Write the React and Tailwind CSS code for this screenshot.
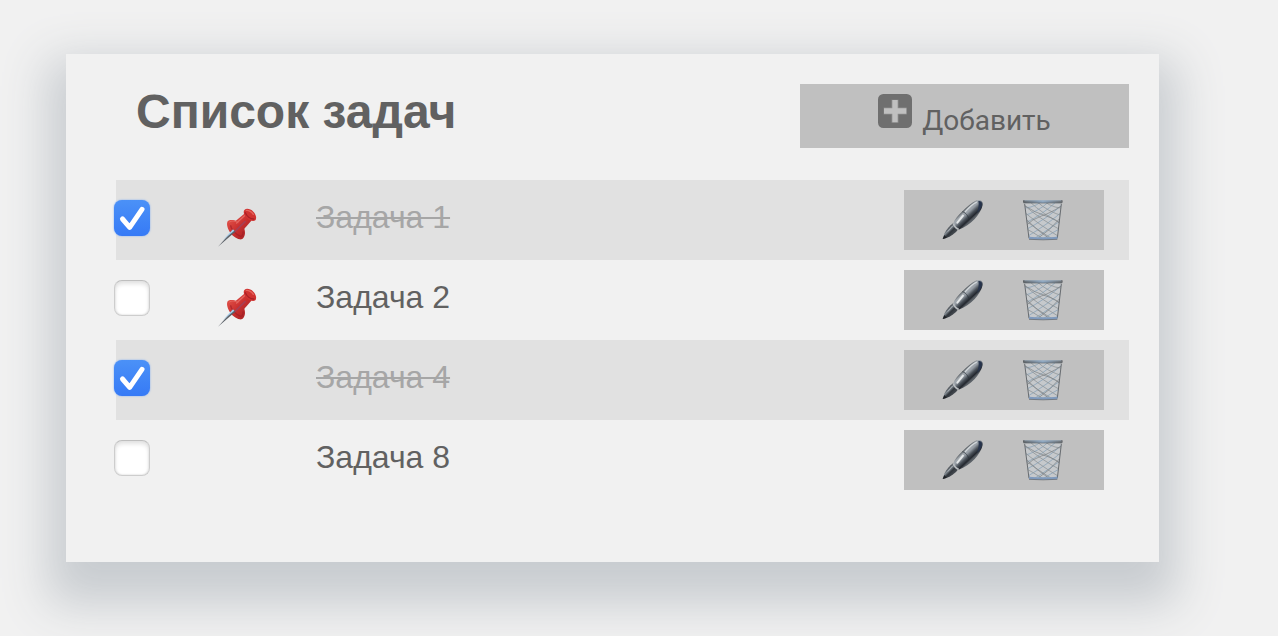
import { useState } from "react";

const initialTasks = [
  { id: 1, title: "Задача 1", done: true, pinned: true },
  { id: 2, title: "Задача 2", done: false, pinned: true },
  { id: 4, title: "Задача 4", done: true, pinned: false },
  { id: 8, title: "Задача 8", done: false, pinned: false },
];

function PlusIcon() {
  return (
    <svg viewBox="0 0 102 102" className="size-[34px]" aria-hidden="true">
      <rect width="102" height="102" rx="16" fill="#6f6f6f" />
      <path d="M51 17V86M17 51H86" stroke="#8c8c8c" strokeWidth="21" />
      <path d="M51 18V85M18 51H85" stroke="#c0c0c0" strokeWidth="16" />
    </svg>
  );
}

function PinIcon() {
  return (
    <svg viewBox="0 0 168 168" className="size-14" aria-hidden="true">
      <defs>
        <linearGradient id="pinBody" x1="0" y1="0" x2="1" y2="1">
          <stop offset="0" stopColor="#e0524a" />
          <stop offset="0.5" stopColor="#cb302f" />
          <stop offset="1" stopColor="#a92426" />
        </linearGradient>
      </defs>
      <path d="M53 64C58 58 72 59 86 65C97 71 106 86 105 99C104 113 97 120 89 118C78 116 65 107 58 94C52 83 49 71 53 64Z" fill="url(#pinBody)" />
      <path d="M62 76C62 86 78 105 92 109C98 109 100 102 99 94" fill="none" stroke="#9c1d25" strokeWidth="4" opacity="0.6" />
      <path d="M73 66L103 41C112 42 125 55 124 62L99 91C90 94 71 76 73 66Z" fill="url(#pinBody)" />
      <path d="M80 69L105 46" stroke="#e56660" strokeWidth="4" strokeLinecap="round" />
      <path d="M74 95L105 65" stroke="#9c4560" strokeWidth="5" strokeLinecap="round" opacity="0.75" />
      <path d="M104 29C110 24 122 27 130 35C138 43 141 55 136 61C130 66 118 62 110 54C102 46 98 34 104 29Z" fill="#d03331" />
      <path d="M105 37C110 48 121 58 133 57" fill="none" stroke="#a92127" strokeWidth="4" />
      <path d="M109 31C116 30 126 36 130 43" fill="none" stroke="#e4645d" strokeWidth="4" strokeLinecap="round" />
      <path d="M57 67C65 61 78 63 85 68" fill="none" stroke="#e4645d" strokeWidth="3" />
      <path d="M24 140L70 89L76 95Z" fill="#5a6068" />
      <path d="M38 121L69 88L73 92Z" fill="#a9cfec" />
    </svg>
  );
}

function PenIcon() {
  return (
    <svg viewBox="12 0 180 180" className="size-[60px]" aria-hidden="true">
      <defs>
        <linearGradient id="penBody" gradientUnits="userSpaceOnUse" x1="94" y1="66" x2="120" y2="94">
          <stop offset="0" stopColor="#50565b" />
          <stop offset="0.2" stopColor="#a4aab0" />
          <stop offset="0.38" stopColor="#969da5" />
          <stop offset="0.62" stopColor="#4b525a" />
          <stop offset="0.85" stopColor="#23272e" />
          <stop offset="1" stopColor="#5a6066" />
        </linearGradient>
        <linearGradient id="penNib" gradientUnits="userSpaceOnUse" x1="50" y1="116" x2="68" y2="134">
          <stop offset="0" stopColor="#33383d" />
          <stop offset="0.3" stopColor="#858d94" />
          <stop offset="0.6" stopColor="#30353b" />
          <stop offset="1" stopColor="#454a50" />
        </linearGradient>
      </defs>
      <path d="M38 147L43 131C50 118 59 107 70 99L86 116C76 130 63 139 47 145Z" fill="url(#penNib)" />
      <path d="M38 147L43 135L50 143Z" fill="#1d2024" />
      <path d="M69 101C76 86 84 76 96 65C110 51 126 37 140 31C151 27 160 34 158 45C155 61 145 74 134 87C121 101 104 113 86 119Z" fill="url(#penBody)" />
      <path d="M145 33C155 31 159 40 154 51C151 58 146 65 141 69C145 56 148 45 145 33Z" fill="#27344c" />
      <path d="M106 65C118 51 130 41 139 37" fill="none" stroke="#d2d7da" strokeWidth="4" strokeLinecap="round" />
      <path d="M82 98L99 77" fill="none" stroke="#e4e7e8" strokeWidth="6" strokeLinecap="round" />
      <path d="M97 65C106 67 115 77 117 89" fill="none" stroke="#2a3037" strokeWidth="2" />
      <path d="M70 101C73 109 79 116 86 118" fill="none" stroke="#b8bcbf" strokeWidth="5" />
      <path d="M54 124L67 109" fill="none" stroke="#a4aab0" strokeWidth="3" strokeLinecap="round" />
    </svg>
  );
}

function BinIcon() {
  return (
    <svg viewBox="6 0 180 180" className="size-[60px]" aria-hidden="true">
      <defs>
        <clipPath id="binShape">
          <path d="M37 38H149L136 147H51Z" />
        </clipPath>
        <linearGradient id="binRim" x1="0" y1="0" x2="1" y2="0">
          <stop offset="0" stopColor="#5e6265" />
          <stop offset="0.5" stopColor="#8fa9c5" />
          <stop offset="1" stopColor="#66696c" />
        </linearGradient>
      </defs>
      <path d="M37 38H149L136 147H51Z" fill="#c6c9cc" />
      <g clipPath="url(#binShape)" fill="none">
        <path
          d="M20 54Q58 58 90 34M32 78Q78 66 112 34M36 101Q92 74 134 34M38 121Q102 88 156 40M40 143Q112 100 156 60M60 150Q120 112 156 84M84 152Q124 126 156 109M108 154L156 130"
          stroke="#8ba5bb" strokeWidth="2.5"
        />
        <path
          d="M166 54Q128 58 96 34M154 78Q108 66 74 34M150 101Q94 74 52 34M148 121Q84 88 30 40M146 143Q74 100 30 60M126 150Q66 112 30 84M102 152Q62 126 30 109M78 154L30 130"
          stroke="#92979a" strokeWidth="2.5"
        />
        <path
          d="M38 47Q69 68 102 78T149 107M148 48Q114 70 88 78T38 110M44 89Q73 120 110 144M143 86Q114 121 79 144"
          stroke="#787d80" strokeWidth="2"
        />
      </g>
      <path d="M38 42L51 145M148 42L136 145" stroke="#686c70" strokeWidth="3" />
      <path d="M51 140Q93 144 137 140L136 148Q93 151 51 148Z" fill="#7f9abd" />
      <path d="M51 148Q93 151 136 148" fill="none" stroke="#606264" strokeWidth="2" />
      <rect x="33" y="30" width="119" height="9" rx="3" fill="url(#binRim)" />
      <path d="M37 32H148" stroke="#a9b6c4" strokeWidth="2" />
      <path d="M35 39H150" stroke="#5c6063" strokeWidth="2" />
    </svg>
  );
}

function TaskCheckbox({ id, checked, onChange }) {
  return (
    <span className="relative -ml-0.5 size-9 shrink-0">
      <input
        id={id}
        type="checkbox"
        checked={checked}
        onChange={onChange}
        className="block size-9 appearance-none rounded-lg border border-[#cdcdcd] border-t-[#bebebe] bg-white shadow-[inset_0_3px_4px_#e2e2e2,inset_0_0_2px_#c8c8c8] checked:border-0 checked:bg-linear-to-b checked:from-[#4b91f7] checked:to-[#367af6] checked:shadow-[0_0_2px_#75a6f4]"
      />
      {checked && (
        <svg viewBox="0 0 36 36" className="pointer-events-none absolute inset-0 size-9" aria-hidden="true">
          <path d="M8.5 19L15.7 27.3L28 9.3" fill="none" stroke="#fff" strokeWidth="5" strokeLinecap="round" strokeLinejoin="round" />
        </svg>
      )}
    </span>
  );
}

function TaskRow({ task, onToggle, onRemove }) {
  const inputId = `task-${task.id}`;
  return (
    <li className="flex h-20 items-center pb-1 odd:bg-[#e1e1e1]">
      <TaskCheckbox id={inputId} checked={task.done} onChange={onToggle} />
      <span className="mt-5 mr-[50px] ml-[60px] w-14 shrink-0">{task.pinned && <PinIcon />}</span>
      <label
        htmlFor={inputId}
        className={
          task.done
            ? "grow pb-0.5 text-[32px] leading-10 text-[#a6a6a6] line-through decoration-2"
            : "grow pb-0.5 text-[32px] leading-10 text-[#616161]"
        }
      >
        {task.title}
      </label>
      <div className="mt-1 mr-[25px] flex w-[200px] justify-center bg-[#c0c0c0]">
        <button type="button" aria-label="Изменить" className="flex w-20 justify-center">
          <PenIcon />
        </button>
        <button type="button" aria-label="Удалить" onClick={onRemove} className="flex w-20 justify-center">
          <BinIcon />
        </button>
      </div>
    </li>
  );
}

export default function App() {
  const [tasks, setTasks] = useState(initialTasks);
  const toggle = (id) => setTasks(tasks.map((t) => (t.id === id ? { ...t, done: !t.done } : t)));
  const remove = (id) => setTasks(tasks.filter((t) => t.id !== id));

  return (
    <div className="min-h-screen bg-[#f1f1f1] pt-[54px] pr-[119px] pl-[66px] font-['Liberation_Sans',Arial,sans-serif] text-[#616161]">
      <main className="bg-[#f1f1f1] pt-[30px] pr-[30px] pb-[62px] pl-[50px] shadow-[0_24px_44px_18px_#c8ccd0]">
        <header className="flex items-start justify-between pb-8 pl-5">
          <h1 className="text-5xl leading-[56px] font-bold">Список задач</h1>
          <button
            type="button"
            className="flex h-16 w-[329px] items-start justify-center gap-2.5 bg-[#c0c0c0] pt-2.5 font-[Roboto,sans-serif] text-[28px] leading-8"
          >
            <PlusIcon />
            <span className="mt-[11px]">Добавить</span>
          </button>
        </header>
        <ul>
          {tasks.map((task) => (
            <TaskRow key={task.id} task={task} onToggle={() => toggle(task.id)} onRemove={() => remove(task.id)} />
          ))}
        </ul>
      </main>
    </div>
  );
}
